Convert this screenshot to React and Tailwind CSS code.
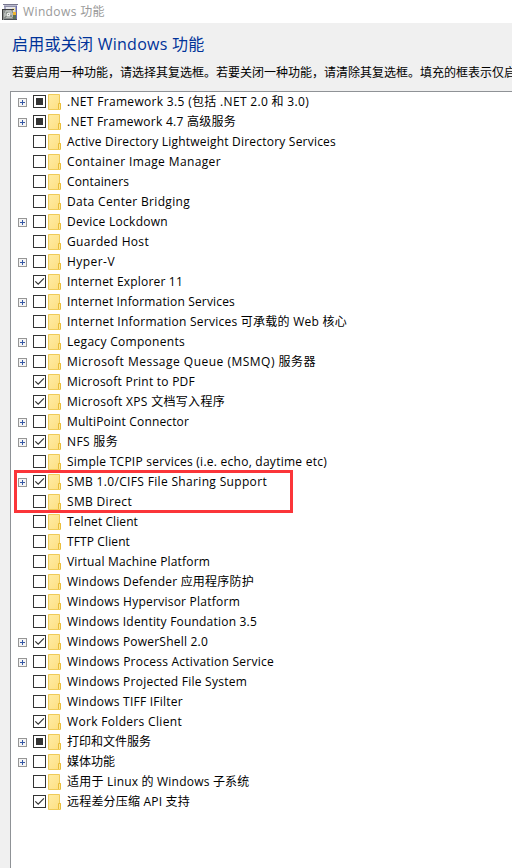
import React, { useLayoutEffect, useRef } from "react";

// label, text width, checkbox state (0 off, 1 checked, 2 partial), expandable
const FEATURES = [
  [".NET Framework 3.5 (包括 .NET 2.0 和 3.0)", 242, 2, true],
  [".NET Framework 4.7 高级服务", 169, 2, true],
  ["Active Directory Lightweight Directory Services", 269, 0, false],
  ["Container Image Manager", 154, 0, false],
  ["Containers", 62, 0, false],
  ["Data Center Bridging", 123, 0, false],
  ["Device Lockdown", 101, 0, true],
  ["Guarded Host", 82, 0, false],
  ["Hyper-V", 48, 0, true],
  ["Internet Explorer 11", 116, 1, false],
  ["Internet Information Services", 168, 0, true],
  ["Internet Information Services 可承载的 Web 核心", 280, 0, false],
  ["Legacy Components", 118, 0, true],
  ["Microsoft Message Queue (MSMQ) 服务器", 249, 0, true],
  ["Microsoft Print to PDF", 128, 1, false],
  ["Microsoft XPS 文档写入程序", 158, 1, false],
  ["MultiPoint Connector", 122, 0, true],
  ["NFS 服务", 51, 1, true],
  ["Simple TCPIP services (i.e. echo, daytime etc)", 260, 0, false],
  ["SMB 1.0/CIFS File Sharing Support", 200, 1, true],
  ["SMB Direct", 65, 0, false],
  ["Telnet Client", 71, 0, false],
  ["TFTP Client", 63, 0, false],
  ["Virtual Machine Platform", 143, 0, false],
  ["Windows Defender 应用程序防护", 187, 0, false],
  ["Windows Hypervisor Platform", 173, 0, false],
  ["Windows Identity Foundation 3.5", 190, 0, false],
  ["Windows PowerShell 2.0", 141, 1, true],
  ["Windows Process Activation Service", 207, 0, true],
  ["Windows Projected File System", 180, 0, false],
  ["Windows TIFF IFilter", 116, 0, false],
  ["Work Folders Client", 115, 1, false],
  ["打印和文件服务", 84, 2, true],
  ["媒体功能", 48, 0, true],
  ["适用于 Linux 的 Windows 子系统", 182.5, 0, false],
  ["远程差分压缩 API 支持", 123, 1, false],
];

// Spreads its text evenly so the line has the given width.
function Fit({ width, className, children }) {
  const ref = useRef(null);
  useLayoutEffect(() => {
    const el = ref.current;
    const fit = () => {
      el.style.letterSpacing = "0px";
      const natural = el.getBoundingClientRect().width;
      el.style.letterSpacing = (width - natural) / [...children].length + "px";
    };
    fit();
    document.fonts.ready.then(fit);
  }, [width, children]);
  return (
    <span ref={ref} className={"inline-block whitespace-pre " + className}>
      {children}
    </span>
  );
}

function Expander() {
  return (
    <svg width="9" height="9" viewBox="0 0 9 9" shapeRendering="crispEdges">
      <rect x=".5" y=".5" width="8" height="8" fill="#f4f4f4" stroke="#969696" />
      <path d="M2 4.5h5M4.5 2v5" stroke="#3457a5" />
    </svg>
  );
}

function Check({ state }) {
  return (
    <svg width="13" height="13" viewBox="0 0 13 13">
      <rect x=".5" y=".5" width="12" height="12" fill="#fff" stroke="#333" />
      {state === 1 && <path d="M2.3 6.3 5.2 9.2 10.9 3.4" fill="none" stroke="#333" strokeWidth="1.2" />}
      {state === 2 && <rect x="3" y="3" width="7" height="7" fill="#333" />}
    </svg>
  );
}

function Folder() {
  return (
    <svg width="13" height="16" viewBox="0 0 13 16">
      <defs>
        <linearGradient id="folder" x1="0" y1="0" x2="1" y2="1">
          <stop offset="0" stopColor="#ffeca4" />
          <stop offset="1" stopColor="#fddf82" />
        </linearGradient>
      </defs>
      <path d="M.5.5h11v9h1v6H.5z" fill="url(#folder)" stroke="#efcb58" />
      <path d="M10.5 15V9.5h2V15" fill="#ffe893" stroke="#e9bd39" />
    </svg>
  );
}

function AppIcon() {
  return (
    <svg width="16" height="16" viewBox="0 0 16 16" shapeRendering="crispEdges">
      <path d="M2 1h12v14H2z" fill="#a9abc4" />
      <path d="M1 0h15v1H1z" fill="#77778f" />
      <path d="M2 1h13v1H2z" fill="#b9b9cd" />
      <path d="M2 2h12v1H2z" fill="#8f90a8" />
      <path d="M4 3h9v3H4z" fill="#e6e7ee" />
      <path d="M10 4h3v3h-3z" fill="#f0e2ae" />
      <path d="M10 7h3v2h-3z" fill="#d5d9cf" />
      <path d="M11 8h3v3h-3z" fill="#eeb52e" />
      <path d="M14 2h1v14h-1z" fill="#6a6cae" />
      <path d="M0 5h11v11H0z" fill="#8c908e" />
      <path d="M0 5h12v1H1v10H0z" fill="#3d3d3d" />
      <path d="M11 11h3v4h-3z" fill="#5b7058" />
      <path d="M2 15h13v1H2z" fill="#4c5055" />
      <path d="M4 6h5v1h1v2h1v4h-1v1H4v-1H2V9h1V7h1z" fill="#b4b8b5" />
      <path d="M4 8h2v2H4zM8 11h2v2H8zM3 12h2v1H3z" fill="#8c948c" />
      <path d="M5 9h3v3H5z" fill="#e9ebe9" />
      <path d="M6 10h1v1H6z" fill="#8b8f8c" />
    </svg>
  );
}

export default function App() {
  return (
    <div className="relative flex h-[868px] w-[512px] flex-col overflow-hidden bg-[#f0f0f0] font-['Open_Sans','Noto_Sans_CJK_SC',sans-serif] text-black">
      <header className="flex h-[23px] shrink-0 items-center bg-white pl-[2px]">
        <AppIcon />
        <Fit width={82} className="ml-[5px] text-[12px] leading-[23px] text-[#999]">Windows 功能</Fit>
      </header>
      <h1 className="h-[42px] shrink-0 pl-3 text-[#003399]">
        <Fit width={192.5} className="text-[16px] leading-[42px]">启用或关闭 Windows 功能</Fit>
      </h1>
      <p className="h-[26px] shrink-0 whitespace-nowrap pl-3 text-[12px] leading-[16px]">
        若要启用一种功能，请选择其复选框。若要关闭一种功能，请清除其复选框。填充的框表示仅启
      </p>
      <ul className="ml-[10px] w-[520px] grow border-l border-t border-[#8f9296] bg-white">
        {FEATURES.map(([label, width, state, expandable]) => (
          <li key={label} className="flex h-5 items-start pl-[7px]">
            <span className="mt-[6px] w-[15px]">{expandable && <Expander />}</span>
            <span className="mt-[3px] w-[15px]"><Check state={state} /></span>
            <span className="mt-[2px] w-[19px]"><Folder /></span>
            <Fit width={width} className="text-[12px] leading-5">{label}</Fit>
          </li>
        ))}
      </ul>
      <div className="absolute left-[14px] top-[470px] h-[43px] w-[279px] border-[3px] border-[#fb3539]" />
    </div>
  );
}
